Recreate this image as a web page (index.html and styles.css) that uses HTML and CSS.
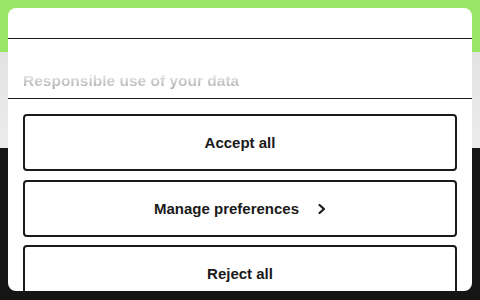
FILE: index.html
```html
<!DOCTYPE html>
<html lang="en">
<head>
<meta charset="utf-8">
<title>Cookie consent</title>
<link rel="stylesheet" href="styles.css">
</head>
<body>
<div class="page">
  <div class="band-green"></div>
  <div class="band-grey"></div>
  <div class="band-dark"></div>
</div>
<div class="modal">
  <div class="modal-head"></div>
  <div class="modal-scroll">
    <h2 class="fade-title">Responsible use of your data</h2>
  </div>
  <div class="modal-actions">
    <button class="btn">Accept all</button>
    <button class="btn">Manage preferences
      <svg class="chev" width="8" height="10" viewBox="0 0 8 10"><polyline points="1.5,1 6,5 1.5,9" fill="none" stroke="#1a1a1a" stroke-width="2.2" stroke-linecap="round" stroke-linejoin="round"/></svg>
    </button>
    <button class="btn">Reject all</button>
  </div>
</div>
</body>
</html>
```
FILE: styles.css
```css
html, body {
  margin: 0;
  padding: 0;
  width: 480px;
  height: 300px;
  overflow: hidden;
  font-family: "Liberation Sans", Arial, sans-serif;
}
.page {
  display: flex;
  flex-direction: column;
  height: 300px;
}
.band-green {
  height: 52px;
  background: #99e566;
}
.band-grey {
  height: 96px;
  background: linear-gradient(to bottom, #e3e3e3, #ececec);
}
.band-dark {
  flex: 1;
  background: #151515;
}
.modal {
  position: absolute;
  top: 8px;
  left: 8px;
  width: 464px;
  height: 283px;
  background: #ffffff;
  border-radius: 8px;
  overflow: hidden;
  display: flex;
  flex-direction: column;
}
.modal-head {
  height: 30px;
  flex: none;
  border-bottom: 1px solid #1a1a1a;
}
.modal-scroll {
  height: 50px;
  flex: none;
  display: flex;
  align-items: flex-end;
  padding: 0 15px 9px;
  border-bottom: 1px solid #1a1a1a;
}
.fade-title {
  margin: 0;
  font-size: 15.5px;
  line-height: 17px;
  font-weight: 700;
  background: linear-gradient(to bottom, #efefef 10%, #adadad 95%);
  -webkit-background-clip: text;
  background-clip: text;
  color: transparent;
}
.modal-actions {
  display: flex;
  flex-direction: column;
  gap: 8.5px;
  padding: 15px 15px 0;
}
.btn {
  flex: none;
  height: 57px;
  border: 2px solid #1a1a1a;
  border-radius: 4px;
  background: #ffffff;
  color: #1a1a1a;
  font-family: "Liberation Sans", Arial, sans-serif;
  font-size: 15px;
  font-weight: 700;
  display: flex;
  align-items: center;
  justify-content: center;
  gap: 19px;
  padding: 0;
}
.chev {
  display: block;
  margin-top: 1px;
}
```
